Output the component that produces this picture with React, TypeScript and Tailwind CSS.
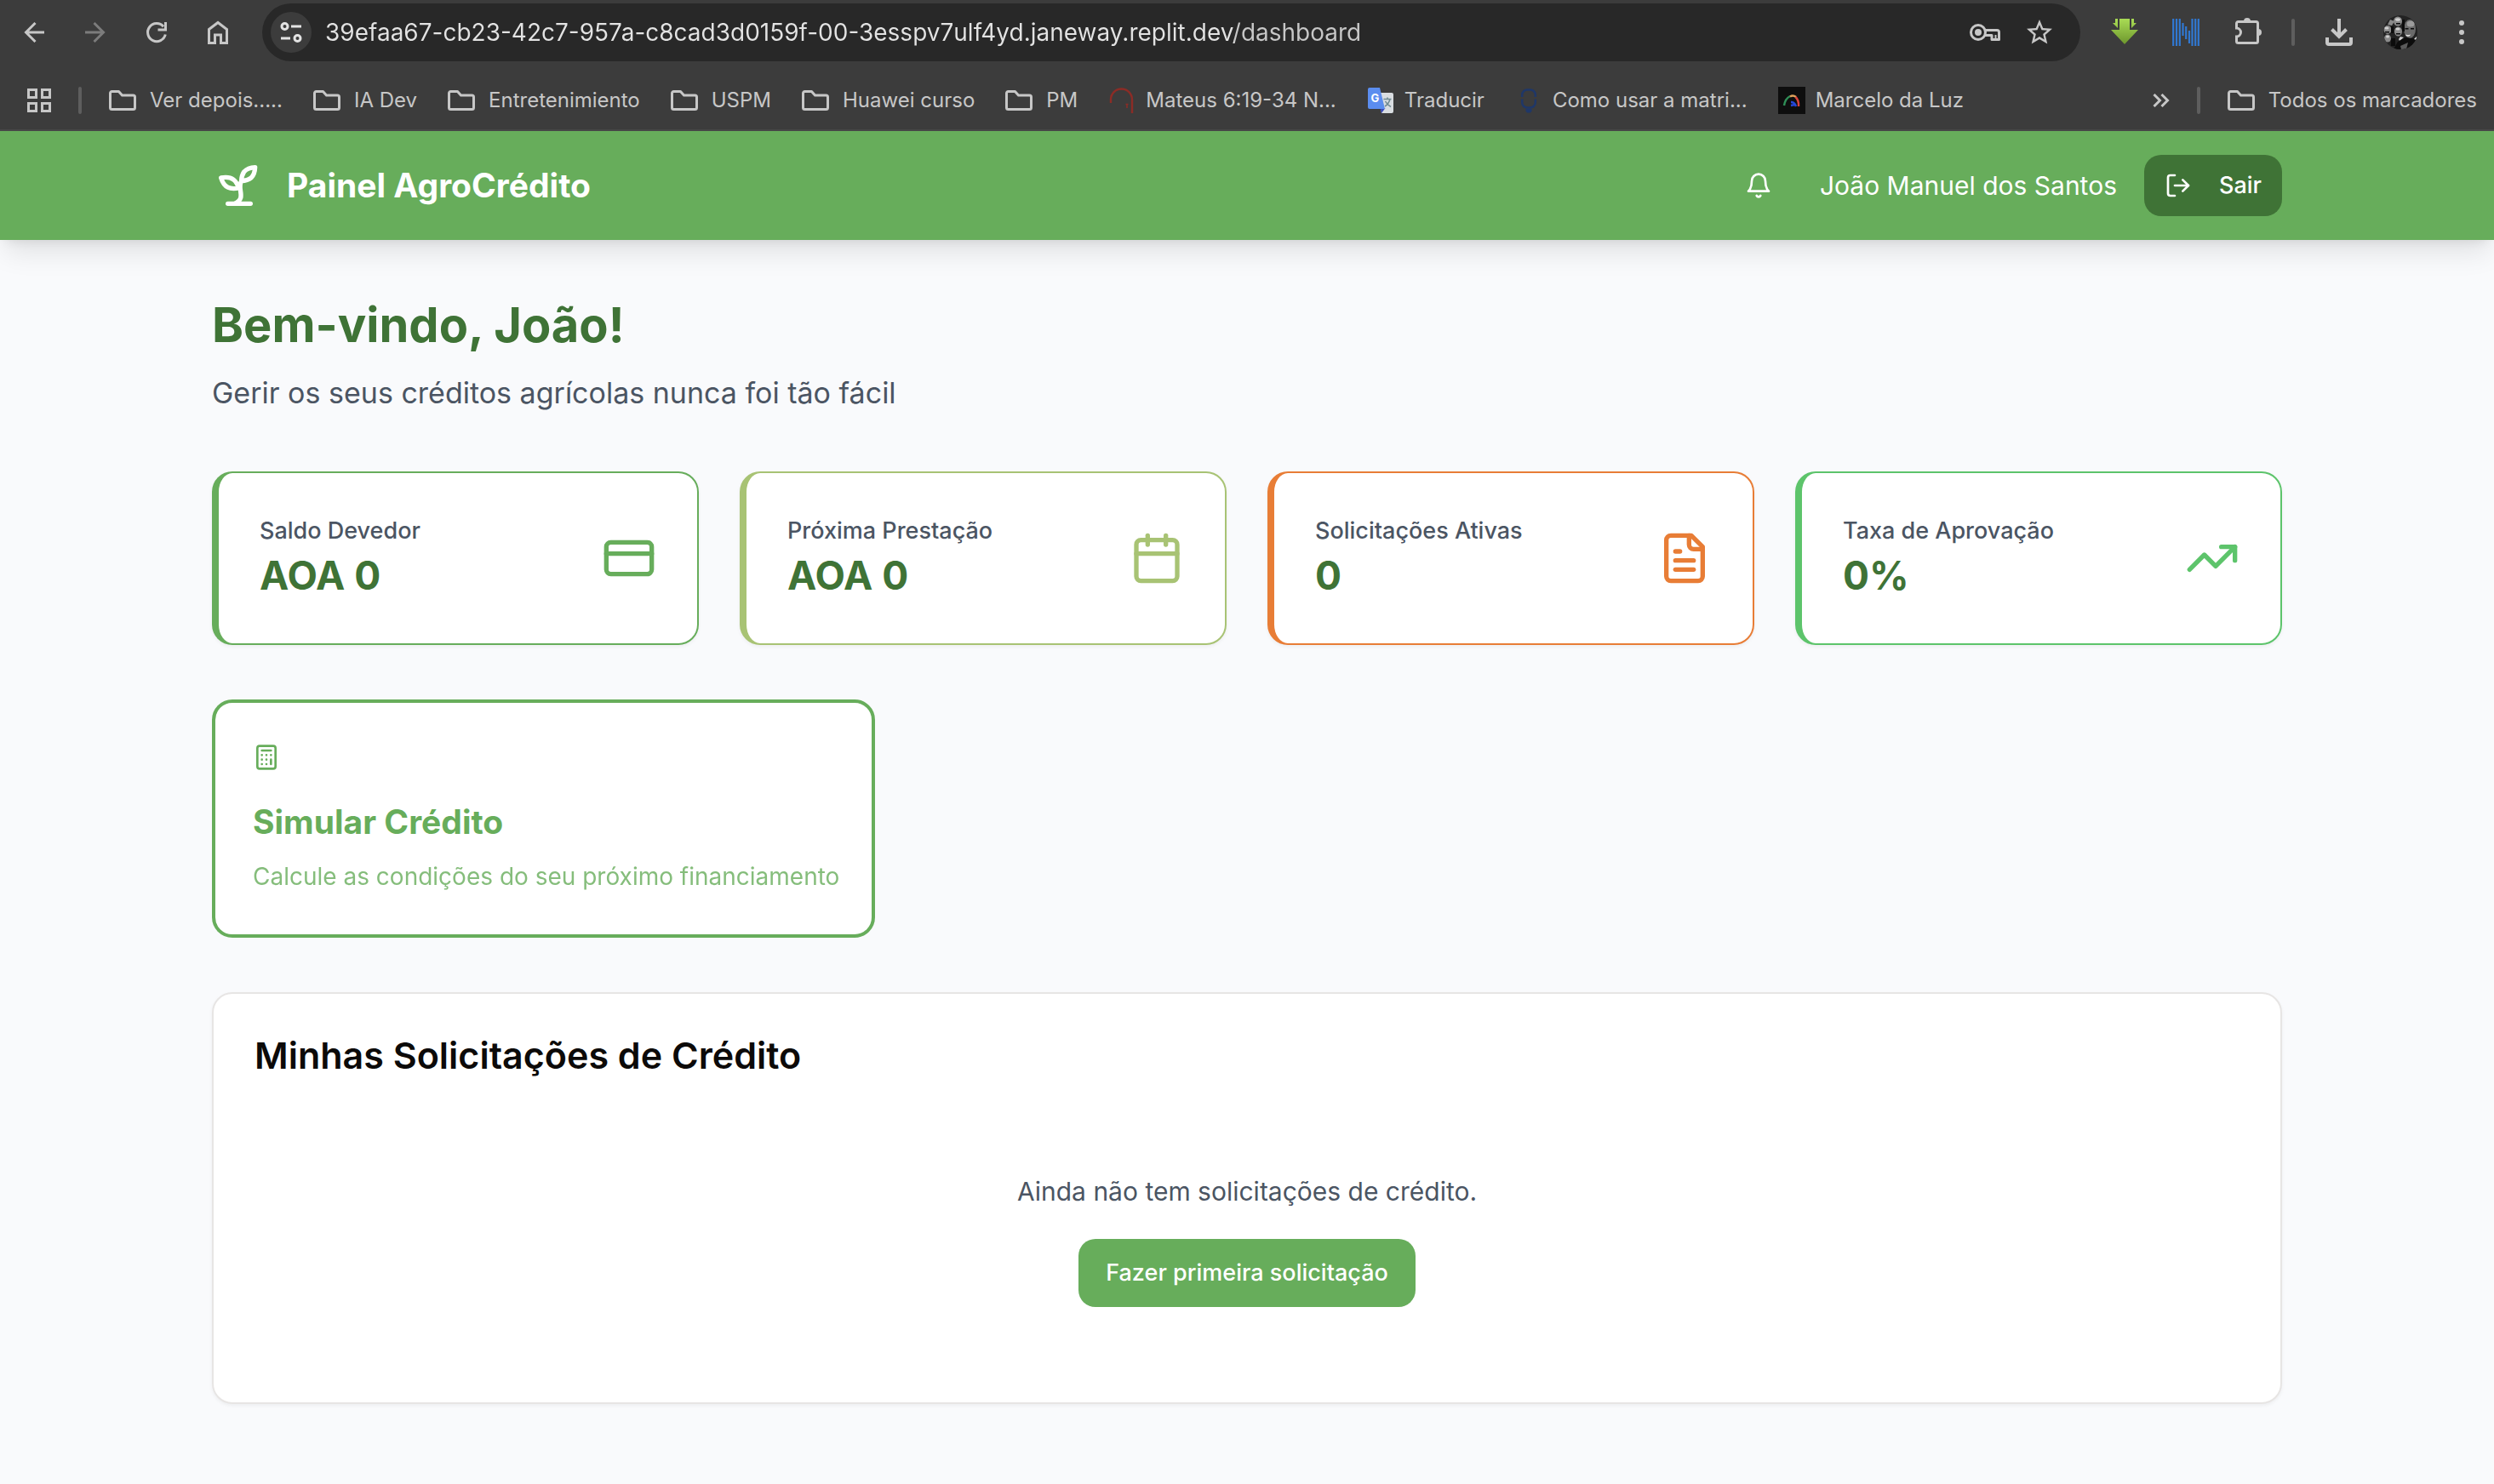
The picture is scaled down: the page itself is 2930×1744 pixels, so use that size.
import React, { useState } from "react";

type IconProps = { className?: string };

function Stroke({
  className = "size-8",
  width = 2,
  children,
}: {
  className?: string;
  width?: number;
  children: React.ReactNode;
}) {
  return (
    <svg
      viewBox="0 0 24 24"
      fill="none"
      stroke="currentColor"
      strokeWidth={width}
      strokeLinecap="round"
      strokeLinejoin="round"
      className={`shrink-0 ${className}`}
      aria-hidden="true"
    >
      {children}
    </svg>
  );
}

/* ---------- Dashboard icons ---------- */

const SproutIcon = ({ className }: IconProps) => (
  <Stroke className={className}>
    <path d="M7 20h10" />
    <path d="M10 20c5.5-2.5.8-6.4 3-10" />
    <path d="M9.5 9.4c1.1.8 1.8 2.2 2.3 3.7-2 .4-3.5.4-4.8-.3-1.2-.6-2.3-1.9-3-4.2 2.8-.5 4.4 0 5.5.8z" />
    <path d="M14.1 6a7 7 0 0 0-1.1 4c1.9-.1 3.3-.6 4.3-1.4 1-1 1.6-2.3 1.7-4.6-2.7.1-4 1-4.9 2z" />
  </Stroke>
);

const BellIcon = ({ className }: IconProps) => (
  <Stroke className={className}>
    <path d="M6 8a6 6 0 0 1 12 0c0 7 3 9 3 9H3s3-2 3-9" />
    <path d="M10.3 21a1.94 1.94 0 0 0 3.4 0" />
  </Stroke>
);

const LogOutIcon = ({ className }: IconProps) => (
  <Stroke className={className}>
    <path d="M9 21H5a2 2 0 0 1-2-2V5a2 2 0 0 1 2-2h4" />
    <path d="m16 17 5-5-5-5" />
    <path d="M21 12H9" />
  </Stroke>
);

const CardIcon = ({ className }: IconProps) => (
  <Stroke className={className}>
    <rect width="20" height="14" x="2" y="5" rx="2" />
    <path d="M2 10h20" />
  </Stroke>
);

const CalendarIcon = ({ className }: IconProps) => (
  <Stroke className={className}>
    <path d="M8 2v4" />
    <path d="M16 2v4" />
    <rect width="18" height="18" x="3" y="4" rx="2" />
    <path d="M3 10h18" />
  </Stroke>
);

const FileTextIcon = ({ className }: IconProps) => (
  <Stroke className={className}>
    <path d="M15 2H6a2 2 0 0 0-2 2v16a2 2 0 0 0 2 2h12a2 2 0 0 0 2-2V7Z" />
    <path d="M14 2v4a2 2 0 0 0 2 2h4" />
    <path d="M10 9H8" />
    <path d="M16 13H8" />
    <path d="M16 17H8" />
  </Stroke>
);

const TrendIcon = ({ className }: IconProps) => (
  <Stroke className={className}>
    <path d="m22 7-8.5 8.5-5-5L2 17" />
    <path d="M16 7h6v6" />
  </Stroke>
);

const CalculatorIcon = ({ className }: IconProps) => (
  <Stroke className={className}>
    <rect width="16" height="20" x="4" y="2" rx="2" />
    <path d="M8 6h8" />
    <path d="M16 14v4" />
    <path d="M16 10h.01M12 10h.01M8 10h.01M12 14h.01M8 14h.01M12 18h.01M8 18h.01" />
  </Stroke>
);

/* ---------- Browser icons ---------- */

const BackIcon = () => (
  <Stroke className="size-6" width={3}>
    <path strokeLinecap="butt" strokeLinejoin="miter" d="M24 12H3M13.5 1 2.5 12l11 11" />
  </Stroke>
);

const ForwardIcon = () => (
  <Stroke className="size-6" width={3}>
    <path strokeLinecap="butt" strokeLinejoin="miter" d="M0 12h21M10.5 1l11 11-11 11" />
  </Stroke>
);

const ReloadIcon = () => (
  <Stroke className="size-6 overflow-visible" width={3}>
    <path strokeLinecap="butt" d="M22.3 14.5A10.5 10.5 0 1 1 20 5.2" />
    <path fill="currentColor" stroke="none" d="M24 0v10.5H13.5v-3H21V0z" />
  </Stroke>
);

const HomeIcon = () => (
  <svg viewBox="0 0 26 28" fill="none" stroke="currentColor" strokeWidth="3" className="h-7 w-[26px]" aria-hidden="true">
    <path d="M2.5 10.5 13 2.5l10.5 8v16h-7V17h-7v9.5h-7z" />
  </svg>
);

const TuneIcon = () => (
  <svg viewBox="0 0 26 24" fill="none" stroke="currentColor" strokeWidth="3" className="h-6 w-[26px]" aria-hidden="true">
    <circle cx="5.5" cy="5" r="3.5" />
    <path d="M13 5h12M1 19h11" />
    <circle cx="20.5" cy="19" r="3.5" />
  </svg>
);

const KeyIcon = () => (
  <svg viewBox="0 0 36 20" fill="none" stroke="currentColor" strokeWidth="3" className="h-5 w-9" aria-hidden="true">
    <circle cx="10" cy="10" r="8.5" />
    <circle cx="10" cy="10" r="4" fill="currentColor" stroke="none" />
    <path strokeLinejoin="round" d="M18 7.5h14a2.5 2.5 0 0 1 2.5 2.5v8.5h-8.5v-5H18" />
    <path strokeWidth="2" d="M30.5 13v5" />
  </svg>
);

const StarIcon = () => (
  <svg viewBox="0 0 24 24" fill="currentColor" className="size-9" aria-hidden="true">
    <path d="M22 9.24l-7.19-.62L12 2 9.19 8.63 2 9.24l5.46 4.73L5.82 21 12 17.27 18.18 21l-1.63-7.03L22 9.24zM12 15.4l-3.76 2.27 1-4.28-3.32-2.88 4.38-.38L12 6.1l1.71 4.04 4.38.38-3.32 2.88 1 4.28L12 15.4z" />
  </svg>
);

const GreenArrowIcon = () => (
  <svg viewBox="0 0 32 32" className="size-8" aria-hidden="true">
    <defs>
      <linearGradient id="arrow" x1="0" y1="0" x2="0" y2="30" gradientUnits="userSpaceOnUse">
        <stop offset="0" stopColor="#a9dc55" />
        <stop offset="1" stopColor="#6d962d" />
      </linearGradient>
    </defs>
    <path fill="url(#arrow)" d="M5 0h1v5H5zM2 5h4V0h2v11zM26 0h1v5h-1zM30 5h-4V0h-2v11z" />
    <path fill="url(#arrow)" d="M10 0h12v13h10L16 30 0 13h10z" />
  </svg>
);

const StripedNIcon = () => (
  <svg viewBox="0 0 32 32" className="size-8" stroke="#3078d2" strokeWidth="2.2" aria-hidden="true">
    <path d="M1.2 0v32M5 0v32M8.8 0v32M12.5 5v15M16.2 9v15M20 14v15M23.5 0v32M27.2 0v32M30.8 0v32" />
  </svg>
);

const PuzzleIcon = () => (
  <svg viewBox="0 0 32 32" fill="none" stroke="currentColor" strokeWidth="3" className="-mt-1 ml-1 size-8" aria-hidden="true">
    <path d="M3.5 5.5h21a2 2 0 0 1 2 2v21a2 2 0 0 1-2 2h-21a2 2 0 0 1-2-2v-5.5a5 5 0 0 0 0-10V7.5a2 2 0 0 1 2-2z" />
    <path fill="currentColor" stroke="none" d="M10 5a4 4 0 0 1 8 0zM27 14a4 4 0 0 1 0 8z" />
  </svg>
);

const DownloadIcon = () => (
  <svg viewBox="0 0 32 32" fill="none" stroke="currentColor" strokeWidth="4" className="size-8" aria-hidden="true">
    <path d="M16 0v21M7.5 12.5 16 21l8.5-8.5" />
    <path d="M2 22v6a2 2 0 0 0 2 2h24a2 2 0 0 0 2-2v-6" />
  </svg>
);

const AvatarIcon = () => (
  <svg viewBox="0 0 40 40" className="size-10 rounded-full" aria-hidden="true">
    <rect width="40" height="40" fill="#222" />
    <g fill="#8a8a8a">
      <ellipse cx="17" cy="7" rx="5" ry="5.5" />
      <ellipse cx="5" cy="17" rx="4.5" ry="5" />
      <ellipse cx="5" cy="27" rx="4" ry="4.5" />
      <ellipse cx="17.5" cy="19" rx="4.5" ry="5.5" />
      <path d="M8 5l5 2-3 5-5-1z" />
    </g>
    <g fill="#cfcfcf">
      <ellipse cx="17" cy="5" rx="3" ry="1.8" />
      <ellipse cx="4" cy="15" rx="2.5" ry="1.5" />
      <ellipse cx="5" cy="25" rx="2" ry="1.5" />
      <ellipse cx="17" cy="16" rx="2.6" ry="1.5" />
      <path d="M20 25l4 1-5 4-1-2z" />
    </g>
    <ellipse cx="31" cy="16" rx="7" ry="11" fill="#6a6a6a" />
    <ellipse cx="32" cy="10" rx="4.5" ry="3.5" fill="#9c9c9c" />
    <path fill="#0c0c0c" d="M25.5 15h4v1.6h-4zM32 15h4v1.6h-4zM15 9h5v1.500h-5zM2 19h5v1.500H2zM15 21h5v1.500h-5zM17 31l9-5 14 2v12H12zM9 13h3v8H9zM9 27h5v9H9zM22 5h3v14h-3z" />
    <path fill="#ececec" d="M26 22.500c2 1 4 1 6 0-1 3-5 3-6 0zM36 28l3-3v4z" />
    <path fill="#5a5a5a" d="M20 36l9-4-2 8h-6z" />
  </svg>
);

const DotsIcon = () => (
  <svg viewBox="0 0 8 28" fill="currentColor" className="h-7 w-2" aria-hidden="true">
    <circle cx="4" cy="3" r="3" />
    <circle cx="4" cy="14" r="3" />
    <circle cx="4" cy="25" r="3" />
  </svg>
);

const AppsIcon = () => (
  <svg viewBox="0 0 28 28" fill="none" stroke="currentColor" strokeWidth="3" className="size-7" aria-hidden="true">
    <path d="M1.5 1.5h9v9h-9zM17.5 1.5h9v9h-9zM1.5 17.5h9v9h-9zM17.5 17.5h9v9h-9z" />
  </svg>
);

const FolderIcon = () => (
  <svg viewBox="0 0 32 24" fill="none" stroke="currentColor" strokeWidth="3" strokeLinejoin="round" className="h-6 w-8 shrink-0" aria-hidden="true">
    <path d="M1.5 3.5a2 2 0 0 1 2-2h8l4 4.5h13a2 2 0 0 1 2 2v12.5a2 2 0 0 1-2 2h-25a2 2 0 0 1-2-2z" />
  </svg>
);

const ArchIcon = () => (
  <svg viewBox="0 0 32 32" fill="none" stroke="#8c2c26" strokeWidth="2.4" className="size-8 shrink-0" aria-hidden="true">
    <path d="M3 19v-4a12.5 12.5 0 0 1 25 0v16" />
    <path d="M22 20v5M20.5 20.5h3" strokeWidth="1.5" />
  </svg>
);

const TranslateIcon = () => (
  <svg viewBox="0 0 32 32" className="size-8 shrink-0" aria-hidden="true">
    <path fill="#d9dde1" d="M14 7h15a2 2 0 0 1 2 2v20a2 2 0 0 1-2 2H17z" />
    <path fill="#3a49b8" d="M15.5 25h6L17 31z" />
    <path fill="#5b8def" d="M3 1h12l6 25H3a2 2 0 0 1-2-2V3a2 2 0 0 1 2-2z" />
    <path fill="none" stroke="#6f8a92" strokeWidth="1.6" d="M19.5 14.5h9M24 12.5v2M27 14.5c-1 4-3 6.5-6 8.5M21.5 17c1.5 3 3.5 5 6.5 6.5" />
    <text x="4.5" y="18" fontSize="13" fontWeight="700" fontFamily="Inter, sans-serif" fill="#fff">
      G
    </text>
  </svg>
);

const MicIcon = () => (
  <svg viewBox="0 0 32 32" fill="none" stroke="#1f3768" strokeWidth="2.5" className="size-8 shrink-0" aria-hidden="true">
    <path d="M8.2 12V9.5a6 6 0 0 1 6-6h3.6a6 6 0 0 1 6 6V12M8.2 14.5v4a6 6 0 0 0 6 6h3.6a6 6 0 0 0 6-6v-4" />
    <path fill="#1f3768" stroke="none" d="M12.5 26h7v2.5l-1.5 2h-4l-1.5-2z" />
  </svg>
);

const RainbowIcon = () => (
  <svg viewBox="0 0 32 32" fill="none" strokeWidth="2.5" className="size-8 shrink-0" aria-hidden="true">
    <rect width="32" height="32" fill="#0e0e0e" />
    <path stroke="#2f8f57" d="M7 22c1-6 3-9 7-11" />
    <path stroke="#e0a35c" d="M14 11.5c2.5-1.500 5-1 7 .5" />
    <path stroke="#d8433d" d="M20.5 12c3 3 4 6 3.500 11" />
    <path stroke="#2447d8" d="M15 18c3 0 5 2 6 5M15 22l4-1" />
  </svg>
);

const ChevronsIcon = () => (
  <svg viewBox="0 0 20 16" fill="none" stroke="currentColor" strokeWidth="3" className="h-4 w-5" aria-hidden="true">
    <path d="M1.5 1l7 7-7 7M10.5 1l7 7-7 7" />
  </svg>
);

/* ---------- Browser chrome ---------- */

function ToolButton({ label, children }: { label: string; children: React.ReactNode }) {
  return (
    <button type="button" aria-label={label} className="flex h-16 w-18 shrink-0 items-center justify-center">
      {children}
    </button>
  );
}

function Toolbar() {
  const [url, setUrl] = useState(
    "39efaa67-cb23-42c7-957a-c8cad3d0159f-00-3esspv7ulf4yd.janeway.replit.dev/dashboard",
  );
  return (
    <div className="flex h-[76px] items-center pr-0.5 pl-1">
      <ToolButton label="Voltar">
        <BackIcon />
      </ToolButton>
      <div className="text-[#7c7c7c]">
        <ToolButton label="Avançar">
          <ForwardIcon />
        </ToolButton>
      </div>
      <ToolButton label="Recarregar">
        <ReloadIcon />
      </ToolButton>
      <ToolButton label="Página inicial">
        <HomeIcon />
      </ToolButton>
      <div className="mx-4 flex h-[68px] min-w-0 flex-1 items-center rounded-full bg-[#282828] pr-[30px] pl-2.5">
        <button
          type="button"
          aria-label="Informações do site"
          className="flex size-12 shrink-0 items-center justify-center rounded-full bg-[#3c3c3c] text-[#e3e3e3]"
        >
          <TuneIcon />
        </button>
        <input
          aria-label="Endereço"
          value={url}
          onChange={(e) => setUrl(e.target.value)}
          className="ml-4 h-10 min-w-0 flex-1 bg-[linear-gradient(90deg,#e3e3e3_1068px,#c7c7c7_1068px)] bg-clip-text text-[28px] text-transparent outline-none"
        />
        <div className="flex items-center gap-7">
          <button type="button" aria-label="Palavras-passe">
            <KeyIcon />
          </button>
          <button type="button" aria-label="Adicionar aos marcadores">
            <StarIcon />
          </button>
        </div>
      </div>
      <ToolButton label="Extensão de downloads">
        <GreenArrowIcon />
      </ToolButton>
      <ToolButton label="Extensão N">
        <StripedNIcon />
      </ToolButton>
      <ToolButton label="Extensões">
        <PuzzleIcon />
      </ToolButton>
      <div className="mx-4 h-8 w-1 rounded-full bg-[#5e5e5e]" />
      <ToolButton label="Transferências">
        <DownloadIcon />
      </ToolButton>
      <ToolButton label="Perfil">
        <AvatarIcon />
      </ToolButton>
      <ToolButton label="Menu">
        <DotsIcon />
      </ToolButton>
    </div>
  );
}

function Folder({ name }: { name: string }) {
  return (
    <button type="button" className="flex shrink-0 items-center gap-4 whitespace-nowrap">
      <FolderIcon />
      {name}
    </button>
  );
}

function Bookmark({ icon, name }: { icon: React.ReactNode; name: string }) {
  return (
    <a href="#" className="flex shrink-0 items-center gap-3 whitespace-nowrap">
      {icon}
      {name}
    </a>
  );
}

function BookmarksBar() {
  return (
    <nav aria-label="Marcadores" className="flex h-[76px] items-center pt-2 pr-5 pl-8 text-[24px] leading-8">
      <button type="button" aria-label="Aplicações">
        <AppsIcon />
      </button>
      <div className="mx-8 h-8 w-1 rounded-full bg-[#5e5e5e]" />
      <div className="flex min-w-0 flex-1 items-center gap-9">
        <Folder name="Ver depois....." />
        <Folder name="IA Dev" />
        <Folder name="Entretenimiento" />
        <Folder name="USPM" />
        <Folder name="Huawei curso" />
        <Folder name="PM" />
        <Bookmark icon={<ArchIcon />} name="Mateus 6:19-34 N..." />
        <Bookmark icon={<TranslateIcon />} name="Traducir" />
        <Bookmark icon={<MicIcon />} name="Como usar a matri..." />
        <Bookmark icon={<RainbowIcon />} name="Marcelo da Luz" />
      </div>
      <button type="button" aria-label="Mais marcadores">
        <ChevronsIcon />
      </button>
      <div className="mx-8 h-8 w-1 rounded-full bg-[#5e5e5e]" />
      <Folder name="Todos os marcadores" />
    </nav>
  );
}

/* ---------- Dashboard ---------- */

const stats = [
  { label: "Saldo Devedor", value: "AOA 0", border: "border-[#67ad5b]", color: "text-[#67ad5b]", Icon: CardIcon },
  { label: "Próxima Prestação", value: "AOA 0", border: "border-[#a8c374]", color: "text-[#a8c374]", Icon: CalendarIcon },
  { label: "Solicitações Ativas", value: "0", border: "border-[#e87d36]", color: "text-[#e87d36]", Icon: FileTextIcon },
  { label: "Taxa de Aprovação", value: "0%", border: "border-[#5dc46b]", color: "text-[#5dc46b]", Icon: TrendIcon },
];

export default function App() {
  return (
    <div className="min-h-screen bg-[#f9fafc] font-['Inter',sans-serif] text-[#0c0a09]">
      <div className="border-b-2 border-[#474747] bg-[#3c3c3c] text-[#c7c7c7]">
        <Toolbar />
        <BookmarksBar />
      </div>

      <header className="bg-[#67ad5b] text-white shadow-[0_20px_30px_-6px_rgba(0,0,0,0.1),0_8px_12px_-8px_rgba(0,0,0,0.1)]">
        <div className="mx-auto flex h-32 max-w-[2560px] items-center justify-between px-16">
          <div className="flex items-center gap-6">
            <SproutIcon className="size-16" />
            <h1 className="text-[39px] leading-14 font-bold">Painel AgroCrédito</h1>
          </div>
          <div className="flex items-center gap-8">
            <button type="button" aria-label="Notificações" className="flex h-18 items-center px-6">
              <BellIcon className="size-8" />
            </button>
            <span className="text-[30px] leading-12">João Manuel dos Santos</span>
            <button
              type="button"
              className="flex h-18 items-center gap-8 rounded-[20px] bg-[#3f7336] px-6 text-[27px] leading-10 font-medium"
            >
              <LogOutIcon className="size-8" />
              Sair
            </button>
          </div>
        </div>
      </header>

      <main className="mx-auto max-w-[2560px] p-16">
        <h2 className="text-[56px] leading-18 font-bold text-[#3f7336]">Bem-vindo, João!</h2>
        <p className="mt-4 text-[34px] leading-14 text-[#4b5563]">
          Gerir os seus créditos agrícolas nunca foi tão fácil
        </p>

        <section className="mt-16 grid grid-cols-4 gap-12">
          {stats.map(({ label, value, border, color, Icon }) => (
            <div
              key={label}
              className={`flex items-center justify-between rounded-3xl border-2 border-l-8 bg-white p-12 shadow-[0_2px_4px_rgba(0,0,0,0.05)] ${border}`}
            >
              <div>
                <p className="text-[27px] leading-10 font-medium text-[#4b5563]">{label}</p>
                <p className="text-[46px] leading-16 font-bold text-[#3f7336]">{value}</p>
              </div>
              <Icon className={`size-16 ${color}`} />
            </div>
          ))}
        </section>

        <section className="mt-16 grid grid-cols-3 gap-12">
          <button
            type="button"
            className="rounded-3xl border-4 border-[#67ad5b] bg-white px-11 py-12 text-left text-[#67ad5b]"
          >
            <CalculatorIcon className="size-8" />
            <span className="mt-8 block text-[39px] leading-14 font-bold">Simular Crédito</span>
            <span className="mt-4 block text-[28px] leading-10 whitespace-nowrap opacity-80">
              Calcule as condições do seu próximo financiamento
            </span>
          </button>
        </section>

        <section className="mt-16 rounded-3xl border-2 border-[#e7e5e4] bg-white p-12 shadow-[0_2px_4px_rgba(0,0,0,0.05)]">
          <h3 className="text-[43px] leading-12 font-semibold">Minhas Solicitações de Crédito</h3>
          <div className="mt-12 flex flex-col items-center gap-8 py-16">
            <p className="text-[30px] leading-12 text-[#4b5563]">Ainda não tem solicitações de crédito.</p>
            <button
              type="button"
              className="h-20 rounded-[20px] bg-[#67ad5b] px-8 text-[27px] leading-10 font-medium text-white"
            >
              Fazer primeira solicitação
            </button>
          </div>
        </section>
      </main>
    </div>
  );
}
